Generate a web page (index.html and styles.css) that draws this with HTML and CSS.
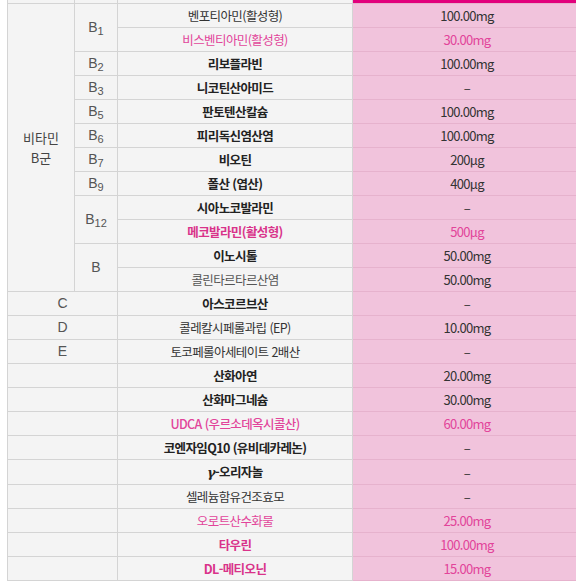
FILE: index.html
```html
<!DOCTYPE html>
<html lang="ko">
<head>
<meta charset="utf-8">
<title>성분표</title>
<link rel="stylesheet" href="styles.css">
</head>
<body>
<table class="tbl">
  <colgroup>
    <col class="c1"><col class="c2"><col class="c3"><col class="c4">
  </colgroup>
  <tr class="head">
    <td></td><td></td><td></td><td class="hv"></td>
  </tr>
  <tr>
    <td rowspan="12" class="grp">비타민<br>B군</td>
    <td rowspan="2" class="sub">B<sub>1</sub></td>
    <td class="nm">벤포티아민(활성형)</td><td class="v">100.00mg</td>
  </tr>
  <tr><td class="nm pk">비스벤티아민(활성형)</td><td class="v pk">30.00mg</td></tr>
  <tr><td class="sub">B<sub>2</sub></td><td class="nm b">리보플라빈</td><td class="v">100.00mg</td></tr>
  <tr><td class="sub">B<sub>3</sub></td><td class="nm b">니코틴산아미드</td><td class="v">–</td></tr>
  <tr><td class="sub">B<sub>5</sub></td><td class="nm b">판토텐산칼슘</td><td class="v">100.00mg</td></tr>
  <tr><td class="sub">B<sub>6</sub></td><td class="nm b">피리독신염산염</td><td class="v">100.00mg</td></tr>
  <tr><td class="sub">B<sub>7</sub></td><td class="nm b">비오틴</td><td class="v">200µg</td></tr>
  <tr><td class="sub">B<sub>9</sub></td><td class="nm b">폴산 (엽산)</td><td class="v">400µg</td></tr>
  <tr><td rowspan="2" class="sub">B<sub>12</sub></td><td class="nm b">시아노코발라민</td><td class="v">–</td></tr>
  <tr><td class="nm b pk">메코발라민(활성형)</td><td class="v pk">500µg</td></tr>
  <tr><td rowspan="2" class="sub">B</td><td class="nm b">이노시톨</td><td class="v">50.00mg</td></tr>
  <tr><td class="nm gr">콜린타르타르산염</td><td class="v">50.00mg</td></tr>
  <tr><td colspan="2" class="sub">C</td><td class="nm b">아스코르브산</td><td class="v">–</td></tr>
  <tr><td colspan="2" class="sub">D</td><td class="nm">콜레칼시페롤과립 (EP)</td><td class="v">10.00mg</td></tr>
  <tr><td colspan="2" class="sub">E</td><td class="nm">토코페롤아세테이트 2배산</td><td class="v">–</td></tr>
  <tr><td colspan="2"></td><td class="nm b">산화아연</td><td class="v">20.00mg</td></tr>
  <tr><td colspan="2"></td><td class="nm b">산화마그네슘</td><td class="v">30.00mg</td></tr>
  <tr><td colspan="2"></td><td class="nm pk md">UDCA (우르소데옥시콜산)</td><td class="v pk">60.00mg</td></tr>
  <tr><td colspan="2"></td><td class="nm b">코엔자임Q10 (유비데카레논)</td><td class="v">–</td></tr>
  <tr><td colspan="2"></td><td class="nm b"><i class="gam">γ</i>-오리자놀</td><td class="v">–</td></tr>
  <tr><td colspan="2"></td><td class="nm">셀레늄함유건조효모</td><td class="v">–</td></tr>
  <tr><td colspan="2"></td><td class="nm pk">오로트산수화물</td><td class="v pk">25.00mg</td></tr>
  <tr><td colspan="2"></td><td class="nm b pk">타우린</td><td class="v pk">100.00mg</td></tr>
  <tr><td colspan="2"></td><td class="nm b pk">DL-메티오닌</td><td class="v pk">15.00mg</td></tr>
</table>
</body>
</html>
```
FILE: styles.css
```css
html, body {
  margin: 0;
  padding: 0;
  overflow: hidden;
  background: #ffffff;
}
body {
  font-family: "Noto Sans CJK KR", "Noto Sans", sans-serif;
  color: #333;
}
.tbl {
  margin-left: 7px;
  border-collapse: collapse;
  table-layout: fixed;
  width: 574px;
}
.c1 { width: 67px; }
.c2 { width: 43px; }
.c3 { width: 235px; }
.c4 { width: 229px; }
.tbl td {
  border: 1px solid #d4d4d4;
  background: #f4f4f4;
  padding: 0;
  height: 23px;
  line-height: 23px;
  text-align: center;
  font-size: 12.5px;
  letter-spacing: -0.6px;
  white-space: nowrap;
}
.tbl .head td {
  height: 3px;
  line-height: 3px;
  border-top: none;
}
.tbl .head td.hv {
  background: #e2007c;
  border-color: #e2007c #f1c3dc #e6b2cd #d4d4d4;
}
.tbl td.v {
  background: #f1c3dc;
  border-top-color: #e6b2cd;
  border-bottom-color: #e6b2cd;
  border-right-color: #f1c3dc;
  color: #333;
  font-size: 13px;
  letter-spacing: -0.7px;
}
.tbl td.grp {
  font-size: 13px;
  line-height: 20px;
  color: #444;
  letter-spacing: 0;
}
.tbl td.sub {
  font-family: "Liberation Sans", Arial, sans-serif;
  font-size: 14px;
  color: #555;
  letter-spacing: 0;
}
.tbl td.sub sub {
  font-size: 11px;
  vertical-align: -3px;
  line-height: 0;
}
.nm { color: #333; }
.b { font-weight: 700; color: #222; }
.md { font-weight: 500; }
.gr { color: #555; }
.tbl td.pk { color: #e2449a; }
.tbl td.b.pk { color: #d9338a; }
.gam {
  font-family: "DejaVu Serif", serif;
  font-style: italic;
  font-weight: 700;
}
```
